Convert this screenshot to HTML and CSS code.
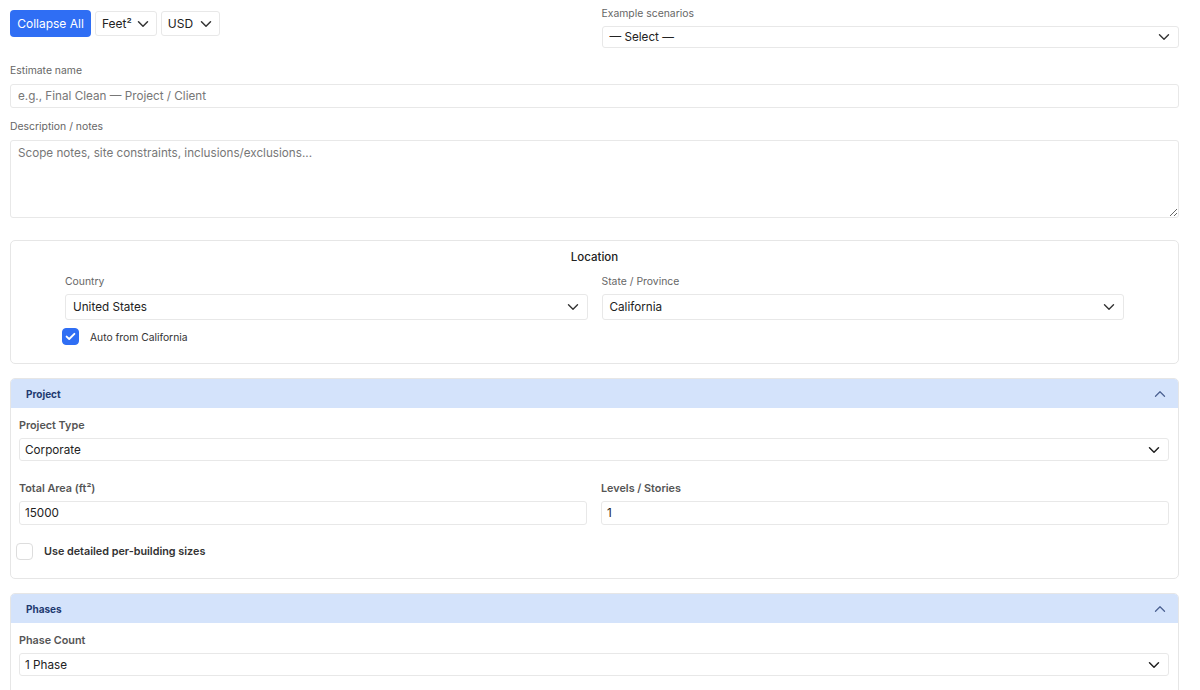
FILE: index.html
```html
<!DOCTYPE html>
<html lang="en">
<head>
    <meta charset="UTF-8">
    <meta name="viewport" content="width=device-width, initial-scale=1.0">
    <title>Cleaning Estimate</title>
    <link rel="stylesheet" href="styles.css">
</head>
<body>
<div class="page">
    <div class="top-row">
        <div class="toolbar">
            <button class="btn-primary">Collapse All</button>
            <div class="mini-select">
                <span>Feet²</span>
                <svg width="12" height="8" viewBox="0 0 12 8"><path d="M1.5 1.8 6 6.2l4.5-4.4" fill="none" stroke="#333" stroke-width="1.5" stroke-linecap="round" stroke-linejoin="round"/></svg>
            </div>
            <div class="mini-select">
                <span>USD</span>
                <svg width="12" height="8" viewBox="0 0 12 8"><path d="M1.5 1.8 6 6.2l4.5-4.4" fill="none" stroke="#333" stroke-width="1.5" stroke-linecap="round" stroke-linejoin="round"/></svg>
            </div>
        </div>
        <div class="field">
            <label class="lbl">Example scenarios</label>
            <div class="select sm">
                <span>— Select —</span>
                <svg width="12" height="8" viewBox="0 0 12 8"><path d="M1.5 1.8 6 6.2l4.5-4.4" fill="none" stroke="#333" stroke-width="1.4" stroke-linecap="round" stroke-linejoin="round"/></svg>
            </div>
        </div>
    </div>

    <label class="lbl name-lbl">Estimate name</label>
    <input class="text-input" type="text" placeholder="e.g., Final Clean — Project / Client">

    <label class="lbl notes-lbl">Description / notes</label>
    <textarea class="notes" placeholder="Scope notes, site constraints, inclusions/exclusions..."></textarea>

    <div class="card location">
        <div class="card-title">Location</div>
        <div class="two-col">
            <div class="field">
                <label class="lbl">Country</label>
                <div class="select md">
                    <span>United States</span>
                    <svg width="12" height="8" viewBox="0 0 12 8"><path d="M1.5 1.8 6 6.2l4.5-4.4" fill="none" stroke="#333" stroke-width="1.4" stroke-linecap="round" stroke-linejoin="round"/></svg>
                </div>
            </div>
            <div class="field">
                <label class="lbl">State / Province</label>
                <div class="select md">
                    <span>California</span>
                    <svg width="12" height="8" viewBox="0 0 12 8"><path d="M1.5 1.8 6 6.2l4.5-4.4" fill="none" stroke="#333" stroke-width="1.4" stroke-linecap="round" stroke-linejoin="round"/></svg>
                </div>
            </div>
        </div>
        <div class="check-row auto">
            <span class="check on">
                <svg width="11" height="9" viewBox="0 0 11 9"><path d="M1.6 4.6 4.2 7 9.4 1.8" fill="none" stroke="#fff" stroke-width="1.9" stroke-linecap="round" stroke-linejoin="round"/></svg>
            </span>
            <span>Auto from California</span>
        </div>
    </div>

    <div class="section">
        <div class="section-head">
            <span>Project</span>
            <svg width="12" height="8" viewBox="0 0 12 8"><path d="M1.5 6.2 6 1.8l4.5 4.4" fill="none" stroke="#4d6393" stroke-width="1.3" stroke-linecap="round" stroke-linejoin="round"/></svg>
        </div>
        <div class="section-body">
            <label class="lbl bold">Project Type</label>
            <div class="select lg">
                <span>Corporate</span>
                <svg width="12" height="8" viewBox="0 0 12 8"><path d="M1.5 1.8 6 6.2l4.5-4.4" fill="none" stroke="#222" stroke-width="1.5" stroke-linecap="round" stroke-linejoin="round"/></svg>
            </div>
            <div class="two-col gap-top">
                <div class="field">
                    <label class="lbl bold">Total Area (ft²)</label>
                    <input class="text-input plain" type="text" value="15000">
                </div>
                <div class="field">
                    <label class="lbl bold">Levels / Stories</label>
                    <input class="text-input plain" type="text" value="1">
                </div>
            </div>
            <div class="check-row detailed">
                <span class="check"></span>
                <span>Use detailed per-building sizes</span>
            </div>
        </div>
    </div>

    <div class="section">
        <div class="section-head">
            <span>Phases</span>
            <svg width="12" height="8" viewBox="0 0 12 8"><path d="M1.5 6.2 6 1.8l4.5 4.4" fill="none" stroke="#4d6393" stroke-width="1.3" stroke-linecap="round" stroke-linejoin="round"/></svg>
        </div>
        <div class="section-body">
            <label class="lbl bold">Phase Count</label>
            <div class="select lg">
                <span>1 Phase</span>
                <svg width="12" height="8" viewBox="0 0 12 8"><path d="M1.5 1.8 6 6.2l4.5-4.4" fill="none" stroke="#222" stroke-width="1.5" stroke-linecap="round" stroke-linejoin="round"/></svg>
            </div>
        </div>
    </div>
</div>
</body>
</html>
```

FILE: styles.css
```css
body {
    margin: 0;
    font-family: Inter, "Noto Sans", Arial, sans-serif;
    color: #222;
    background: #fff;
}
.page {
    padding: 7px 21px 40px 10px;
}
.top-row {
    display: grid;
    grid-template-columns: 1fr 1fr;
    column-gap: 14px;
}
.toolbar {
    display: flex;
    align-items: center;
    gap: 4px;
    height: 29px;
    margin-top: 2px;
}
.btn-primary {
    height: 27px;
    width: 81px;
    padding: 0;
    border: none;
    border-radius: 4px;
    background-color: #2f6ef4;
    color: #fff;
    font-family: inherit;
    font-size: 12px;
}
.mini-select {
    display: flex;
    align-items: center;
    justify-content: space-between;
    min-width: 59px;
    height: 25px;
    padding: 0 7px 0 6px;
    border: 1px solid #e8e8e8;
    border-radius: 3px;
    font-size: 12px;
    color: #222;
    box-sizing: border-box;
}
.mini-select svg {
    margin-left: 5px;
}
.field {
    display: flex;
    flex-direction: column;
    min-width: 0;
}
.lbl {
    display: block;
    font-size: 10.4px;
    line-height: 14px;
    color: #666;
    margin-bottom: 5px;
}
.lbl.bold {
    font-size: 10.8px;
    font-weight: 600;
    color: #555;
    margin-bottom: 5px;
}
.select {
    display: flex;
    align-items: center;
    justify-content: space-between;
    border: 1px solid #e8e8e8;
    border-radius: 3px;
    box-sizing: border-box;
    padding: 0 8px 0 7px;
    font-size: 11.7px;
    color: #222;
}
.select.sm { height: 22px; }
.select.md { height: 26px; }
.select.lg { height: 23px; padding-left: 5px; }
.name-lbl {
    margin-top: 16px;
    margin-bottom: 6px;
}
.text-input {
    display: block;
    width: 100%;
    box-sizing: border-box;
    height: 24px;
    padding: 0 7px;
    border: 1px solid #e8e8e8;
    border-radius: 3px;
    font-family: inherit;
    font-size: 11.7px;
    color: #222;
}
.text-input::placeholder,
.notes::placeholder {
    color: #777;
}
.text-input.plain {
    padding-left: 5px;
}
.notes-lbl {
    margin-top: 12px;
    margin-bottom: 6px;
}
.notes {
    display: block;
    width: 100%;
    box-sizing: border-box;
    height: 78px;
    padding: 5px 7px;
    border: 1px solid #e8e8e8;
    border-radius: 3px;
    font-family: inherit;
    font-size: 11.7px;
}
.card {
    margin-top: 22px;
    border: 1px solid #e6e6e6;
    border-radius: 5px;
    padding: 8px 54px 18px 54px;
}
.card-title {
    text-align: center;
    font-size: 11.5px;
    font-weight: 500;
    line-height: 16px;
    color: #222;
    margin-bottom: 10px;
}
.two-col {
    display: grid;
    grid-template-columns: 1fr 1fr;
    column-gap: 14px;
}
.check-row {
    display: flex;
    align-items: center;
    font-size: 10.3px;
    color: #333;
}
.check-row.auto {
    margin-top: 8px;
    margin-left: -3px;
    gap: 11px;
}
.check {
    display: flex;
    align-items: center;
    justify-content: center;
    width: 17px;
    height: 17px;
    box-sizing: border-box;
    border: 1px solid #ddd;
    border-radius: 4px;
    background: #fff;
}
.check.on {
    background: #2f6ef4;
    border-color: #2f6ef4;
}
.section {
    margin-top: 14px;
    border: 1px solid #e6e6e6;
    border-radius: 5px;
    overflow: hidden;
}
.section-head {
    display: flex;
    align-items: center;
    justify-content: space-between;
    height: 29px;
    padding: 0 12px 0 15px;
    background-color: #d4e3fb;
    font-size: 10px;
    font-weight: 700;
    color: #1e3a70;
}
.section-body {
    padding: 11px 9px 18px 8px;
}
.gap-top {
    margin-top: 21px;
}
.check-row.detailed {
    margin-top: 18px;
    margin-left: -3px;
    gap: 11px;
    font-size: 10.8px;
    font-weight: 600;
    color: #333;
}
```
